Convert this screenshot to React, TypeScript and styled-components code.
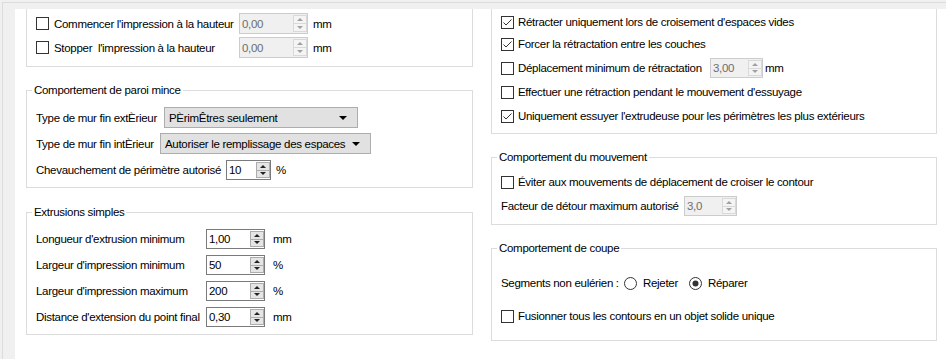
import React from 'react';
import styled, { createGlobalStyle } from 'styled-components';

const Global = createGlobalStyle`
  html, body { margin: 0; padding: 0; background: #fff; }
  body {
    font-family: "Liberation Sans", Arial, sans-serif;
    font-size: 11.5px;
    letter-spacing: -0.3px;
    color: #000;
  }
  * { box-sizing: border-box; }
`;

const Frame = styled.div`
  width: 946px;
  height: 359px;
  overflow: hidden;
  background: #f0f0f0;
  padding: 2px 0 0 2px;
  display: flex;
`;

const FrameInner = styled.div`
  flex: 1;
  display: flex;
  border-top: 1px solid #dcdcdc;
  border-left: 1px solid #dcdcdc;
  padding: 6px 0 0 12px;
`;

const Content = styled.div`
  flex: 1;
  display: flex;
  gap: 18px;
  background: #fff;
  padding: 0 9px 0 11px;
`;

const Column = styled.div<{ $w: number }>`
  width: ${p => p.$w}px;
  display: flex;
  flex-direction: column;
`;

const Group = styled.fieldset<{ $cut?: boolean; $mt?: number }>`
  margin: ${p => p.$mt ?? 0}px 0 0 0;
  padding: 0;
  min-width: 0;
  border: 1px solid #dcdcdc;
  ${p => (p.$cut ? 'border-top: none;' : '')}
`;

const Legend = styled.legend`
  margin-left: 5px;
  padding: 0 2px;
  line-height: 16px;
`;

const Body = styled.div<{ $pt: number; $pb: number; $pl?: number }>`
  display: flex;
  flex-direction: column;
  padding: ${p => p.$pt}px 0 ${p => p.$pb}px ${p => p.$pl ?? 9}px;
`;

const Row = styled.div<{ $mt?: number; $h?: number }>`
  display: flex;
  align-items: center;
  height: ${p => p.$h ?? 20}px;
  margin-top: ${p => p.$mt ?? 0}px;
  white-space: nowrap;
`;

const Label = styled.span<{ $w?: number }>`
  flex-shrink: 0;
  ${p => (p.$w ? `width: ${p.$w}px;` : '')}
`;

const BoxWrap = styled.span<{ $gap?: number }>`
  width: 13px;
  height: 13px;
  flex-shrink: 0;
  border: 1px solid #333;
  background: #fff;
  margin-right: ${p => p.$gap ?? 4}px;
  display: flex;
  align-items: center;
  justify-content: center;
`;

const CheckBox = ({ checked, gap }: { checked?: boolean; gap?: number }) => (
  <BoxWrap $gap={gap}>
    {checked && (
      <svg width="11" height="11" viewBox="0 0 11 11">
        <polyline points="1.5,5.5 4,8 9.5,2.5" fill="none" stroke="#333" strokeWidth="1" />
      </svg>
    )}
  </BoxWrap>
);

const RadioWrap = styled.span`
  width: 13px;
  height: 13px;
  flex-shrink: 0;
  margin-right: 6px;
  display: inline-flex;
`;

const Radio = ({ checked }: { checked?: boolean }) => (
  <RadioWrap>
    <svg width="13" height="13" viewBox="0 0 13 13">
      <circle cx="6.5" cy="6.5" r="6" fill="#fff" stroke="#333" strokeWidth="1" />
      {checked && <circle cx="6.5" cy="6.5" r="3" fill="#333" />}
    </svg>
  </RadioWrap>
);

const SpinBox = styled.div<{ $w: number; $h?: number; $off?: boolean }>`
  width: ${p => p.$w}px;
  height: ${p => p.$h ?? 20}px;
  flex-shrink: 0;
  display: flex;
  align-items: stretch;
  border: 1px solid ${p => (p.$off ? '#cccccc' : '#7a7a7a')};
  background: ${p => (p.$off ? '#f0f0f0' : '#fff')};
  color: ${p => (p.$off ? '#6d6d6d' : '#000')};
`;

const SpinValue = styled.span`
  flex: 1;
  display: flex;
  align-items: center;
  padding-left: 2px;
`;

const SpinBtns = styled.span<{ $off?: boolean }>`
  width: 14px;
  margin: 1px 0 1px 0;
  display: flex;
  flex-direction: column;
  border: 1px solid ${p => (p.$off ? '#d9d9d9' : '#adadad')};
  background: ${p => (p.$off ? '#f4f4f4' : '#e5e5e5')};
`;

const SpinHalf = styled.span<{ $down?: boolean; $off?: boolean }>`
  flex: 1;
  display: flex;
  align-items: center;
  justify-content: center;
  ${p => (p.$down ? `border-top: 1px solid ${p.$off ? '#d9d9d9' : '#adadad'};` : '')}
  &::after {
    content: '';
    width: 0;
    height: 0;
    border-left: 3px solid transparent;
    border-right: 3px solid transparent;
    ${p =>
      p.$down
        ? `border-top: 3px solid ${p.$off ? '#a0a0a0' : '#222'};`
        : `border-bottom: 3px solid ${p.$off ? '#a0a0a0' : '#222'};`}
  }
`;

const Spin = ({ value, w, h, off }: { value: string; w: number; h?: number; off?: boolean }) => (
  <SpinBox $w={w} $h={h} $off={off}>
    <SpinValue>{value}</SpinValue>
    <SpinBtns $off={off}>
      <SpinHalf $off={off} />
      <SpinHalf $down $off={off} />
    </SpinBtns>
  </SpinBox>
);

const Unit = styled.span<{ $ml: number }>`
  margin-left: ${p => p.$ml}px;
`;

const ComboBox = styled.div<{ $w: number }>`
  width: ${p => p.$w}px;
  height: 21px;
  flex-shrink: 0;
  display: flex;
  align-items: center;
  padding-left: 4px;
  border: 1px solid #adadad;
  background: #e1e1e1;
  &::after {
    content: '';
    margin-left: auto;
    margin-right: 10px;
    width: 0;
    height: 0;
    border-left: 4px solid transparent;
    border-right: 4px solid transparent;
    border-top: 4px solid #000;
  }
`;

const RadioText = styled.span<{ $mr?: number }>`
  margin-right: ${p => p.$mr ?? 0}px;
`;

export default function App() {
  return (
    <>
      <Global />
      <Frame>
        <FrameInner>
          <Content>
            <Column $w={447}>
              <Group $cut>
                <Body $pt={4} $pb={8}>
                  <Row $h={21}>
                    <CheckBox gap={5} />
                    <Label $w={185}>Commencer l'impression à la hauteur</Label>
                    <Spin value="0,00" w={69} h={21} off />
                    <Unit $ml={5}>mm</Unit>
                  </Row>
                  <Row $h={21} $mt={3}>
                    <CheckBox gap={5} />
                    <Label $w={185}>Stopper&nbsp; l'impression à la hauteur</Label>
                    <Spin value="0,00" w={69} h={21} off />
                    <Unit $ml={5}>mm</Unit>
                  </Row>
                </Body>
              </Group>

              <Group $mt={15}>
                <Legend>Comportement de paroi mince</Legend>
                <Body $pt={9} $pb={7}>
                  <Row $h={21}>
                    <Label $w={128}>Type de mur fin extÈrieur</Label>
                    <ComboBox $w={194}>PÈrimÊtres seulement</ComboBox>
                  </Row>
                  <Row $h={21} $mt={5}>
                    <Label $w={124}>Type de mur fin intÈrieur</Label>
                    <ComboBox $w={211}>Autoriser le remplissage des espaces</ComboBox>
                  </Row>
                  <Row $mt={6}>
                    <Label $w={190}>Chevauchement de périmètre autorisé</Label>
                    <Spin value="10" w={45} />
                    <Unit $ml={5}>%</Unit>
                  </Row>
                </Body>
              </Group>

              <Group $mt={16}>
                <Legend>Extrusions simples</Legend>
                <Body $pt={9} $pb={7}>
                  <Row>
                    <Label $w={170}>Longueur d'extrusion minimum</Label>
                    <Spin value="1,00" w={59} />
                    <Unit $ml={8}>mm</Unit>
                  </Row>
                  <Row $mt={6}>
                    <Label $w={170}>Largeur d'impression minimum</Label>
                    <Spin value="50" w={59} />
                    <Unit $ml={8}>%</Unit>
                  </Row>
                  <Row $mt={6}>
                    <Label $w={170}>Largeur d'impression maximum</Label>
                    <Spin value="200" w={59} />
                    <Unit $ml={8}>%</Unit>
                  </Row>
                  <Row $mt={6}>
                    <Label $w={170}>Distance d'extension du point final</Label>
                    <Spin value="0,30" w={59} />
                    <Unit $ml={8}>mm</Unit>
                  </Row>
                </Body>
              </Group>
            </Column>

            <Column $w={446}>
              <Group $cut>
                <Body $pt={3} $pb={7}>
                  <Row>
                    <CheckBox checked />
                    <Label>Rétracter uniquement lors de croisement d'espaces vides</Label>
                  </Row>
                  <Row $mt={2}>
                    <CheckBox checked />
                    <Label>Forcer la rétractation entre les couches</Label>
                  </Row>
                  <Row $mt={4}>
                    <CheckBox />
                    <Label $w={192}>Déplacement minimum de rétractation</Label>
                    <Spin value="3,00" w={53} off />
                    <Unit $ml={2}>mm</Unit>
                  </Row>
                  <Row $mt={4}>
                    <CheckBox />
                    <Label>Effectuer une rétraction pendant le mouvement d'essuyage</Label>
                  </Row>
                  <Row $mt={4}>
                    <CheckBox checked />
                    <Label>Uniquement essuyer l'extrudeuse pour les périmètres les plus extérieurs</Label>
                  </Row>
                </Body>
              </Group>

              <Group $mt={15}>
                <Legend>Comportement du mouvement</Legend>
                <Body $pt={7} $pb={8}>
                  <Row>
                    <CheckBox />
                    <Label>Éviter aux mouvements de déplacement de croiser le contour</Label>
                  </Row>
                  <Row $mt={4}>
                    <Label $w={183}>Facteur de détour maximum autorisé</Label>
                    <Spin value="3,0" w={53} off />
                  </Row>
                </Body>
              </Group>

              <Group $mt={15}>
                <Legend>Comportement de coupe</Legend>
                <Body $pt={17} $pb={14}>
                  <Row>
                    <Label $w={123}>Segments non eulérien :</Label>
                    <Radio />
                    <RadioText $mr={11}>Rejeter</RadioText>
                    <Radio checked />
                    <RadioText>Réparer</RadioText>
                  </Row>
                  <Row $mt={13}>
                    <CheckBox />
                    <Label>Fusionner tous les contours en un objet solide unique</Label>
                  </Row>
                </Body>
              </Group>
            </Column>
          </Content>
        </FrameInner>
      </Frame>
    </>
  );
}
